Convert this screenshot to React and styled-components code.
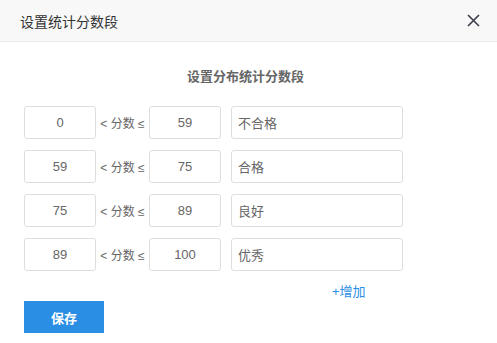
import React, { useState } from 'react';
import styled, { createGlobalStyle } from 'styled-components';

const GlobalStyle = createGlobalStyle`
  html, body { margin: 0; padding: 0; background: #fff; }
  body { font-family: "Liberation Sans", Arial, "Noto Sans CJK SC", sans-serif; }
  * { box-sizing: border-box; }
`;

const Dialog = styled.div`
  width: 497px;
  height: 343px;
  background: #fff;
  display: flex;
  flex-direction: column;
`;

const Header = styled.div`
  height: 42px;
  background: #f8f8f8;
  border-bottom: 1px solid #eaeaea;
  display: flex;
  align-items: center;
  justify-content: space-between;
  padding: 0 16px 0 20px;
`;

const HeaderTitle = styled.div`
  font-size: 14px;
  color: #333;
`;

const CloseButton = styled.button`
  border: none;
  background: none;
  padding: 0;
  width: 16px;
  height: 16px;
  display: flex;
  align-items: center;
  justify-content: center;
  cursor: pointer;
`;

const Body = styled.div`
  padding: 25px 24px 0 24px;
  display: flex;
  flex-direction: column;
`;

const SubTitle = styled.div`
  text-align: center;
  font-size: 13px;
  font-weight: bold;
  color: #666;
  line-height: 20px;
  margin-left: -6px;
`;

const Rows = styled.div`
  margin-top: 19px;
  display: flex;
  flex-direction: column;
  gap: 11px;
`;

const Row = styled.div`
  display: flex;
  align-items: center;
  height: 33px;
`;

const Input = styled.input`
  width: ${(p) => p.$width}px;
  height: 33px;
  border: 1px solid #dedede;
  border-radius: 3px;
  padding: 0 6px;
  font-family: inherit;
  font-size: 13px;
  color: #666;
  text-align: ${(p) => (p.$center ? 'center' : 'left')};
  outline: none;
  margin-right: ${(p) => p.$gap || 0}px;
`;

const Between = styled.span`
  width: 53px;
  font-size: 12px;
  color: #666;
  text-align: center;
  white-space: nowrap;
`;

const AddLink = styled.a`
  align-self: flex-start;
  margin: 13px 0 0 308px;
  font-size: 13px;
  color: #2b8ee6;
  text-decoration: none;
  line-height: 16px;
  cursor: pointer;
`;

const SaveButton = styled.button`
  margin-top: 1px;
  width: 80px;
  height: 32px;
  border: none;
  background: #2a8ee4;
  color: #fff;
  font-family: inherit;
  font-size: 13px;
  font-weight: bold;
  cursor: pointer;
`;

const initialRows = [
  { min: '0', max: '59', label: '不合格' },
  { min: '59', max: '75', label: '合格' },
  { min: '75', max: '89', label: '良好' },
  { min: '89', max: '100', label: '优秀' },
];

const App = () => {
  const [rows] = useState(initialRows);

  return (
    <>
      <GlobalStyle />
      <Dialog>
        <Header>
          <HeaderTitle>设置统计分数段</HeaderTitle>
          <CloseButton aria-label="close">
            <svg width="13" height="13" viewBox="0 0 13 13">
              <path d="M1 1L12 12M12 1L1 12" stroke="#3a3d4a" strokeWidth="1.6" />
            </svg>
          </CloseButton>
        </Header>
        <Body>
          <SubTitle>设置分布统计分数段</SubTitle>
          <Rows>
            {rows.map((row, i) => (
              <Row key={i}>
                <Input $width={72} $center defaultValue={row.min} />
                <Between>&lt; 分数 ≤</Between>
                <Input $width={72} $center $gap={10} defaultValue={row.max} />
                <Input $width={172} defaultValue={row.label} />
              </Row>
            ))}
          </Rows>
          <AddLink>+增加</AddLink>
          <SaveButton>保存</SaveButton>
        </Body>
      </Dialog>
    </>
  );
};

export default App;
